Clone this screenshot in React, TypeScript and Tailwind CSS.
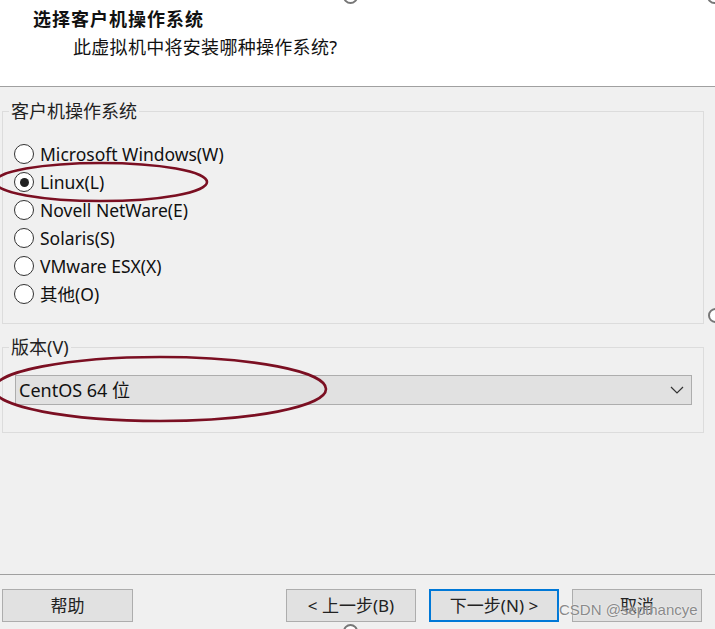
import React, { useState } from "react";

const OPTIONS = [
  "Microsoft Windows(W)",
  "Linux(L)",
  "Novell NetWare(E)",
  "Solaris(S)",
  "VMware ESX(X)",
  "其他(O)",
];

const FONT = "font-['Noto_Sans','Noto_Sans_CJK_SC',sans-serif]";

const Radio = ({ checked }: { checked: boolean }) => (
  <span className="w-[20px] h-[20px] rounded-full border border-[#333] bg-white flex items-center justify-center shrink-0">
    {checked && <span className="w-[9px] h-[9px] rounded-full bg-[#222]" />}
  </span>
);

const Button = ({
  label,
  focused,
  className,
}: {
  label: string;
  focused?: boolean;
  className?: string;
}) => (
  <button
    className={
      "h-[33px] w-[130px] bg-[#e1e1e1] text-[17px] text-[#222] " +
      (focused ? "border-2 border-[#0078d7] " : "border border-[#adadad] ") +
      (className || "")
    }
  >
    {label}
  </button>
);

export default function App() {
  const [selected, setSelected] = useState(1);

  return (
    <div
      className={`relative w-[715px] h-[629px] overflow-hidden bg-[#f0f0f0] ${FONT} text-[#111]`}
    >
      {/* header */}
      <div className="h-[87px] bg-white border-b border-[#a0a0a0] pt-[5px]">
        <div className="pl-[33px] text-[18px] font-bold leading-[26px] tracking-[1px] font-['Noto_Sans_CJK_SC',sans-serif]">
          选择客户机操作系统
        </div>
        <div className="pl-[73px] mt-[3px] text-[18px] leading-[26px] tracking-[0.3px]">
          此虚拟机中将安装哪种操作系统?
        </div>
      </div>

      {/* guest os group */}
      <fieldset className="mx-[2px] mr-[11px] mt-[11px] border border-[#dcdcdc] h-[226px] pl-[11px]">
        <legend className="-ml-[5px] px-[2px] text-[18px] leading-[26px] text-[#222]">
          客户机操作系统
        </legend>
        <div className="flex flex-col mt-[16px]">
          {OPTIONS.map((o, i) => (
            <label
              key={o}
              className="h-[28px] flex items-center gap-[6px] cursor-pointer"
              onClick={() => setSelected(i)}
            >
              <Radio checked={selected === i} />
              <span className="text-[17.5px] leading-[28px]">{o}</span>
            </label>
          ))}
        </div>
      </fieldset>

      {/* version group */}
      <fieldset className="mx-[2px] mr-[11px] mt-[10px] border border-[#dcdcdc] h-[99px] pl-[12px] pr-[11px]">
        <legend className="-ml-[6px] px-[2px] text-[18px] leading-[26px] text-[#222]">
          版本(V)
        </legend>
        <div className="mt-[15px] h-[30px] bg-[#e1e1e1] border border-[#adadad] flex items-center justify-between pl-[3px] pr-[6px]">
          <span className="text-[18px]">CentOS 64 位</span>
          <svg width="16" height="10" viewBox="0 0 16 10">
            <path d="M2 2 L8 8 L14 2" fill="none" stroke="#333" strokeWidth="1.2" />
          </svg>
        </div>
      </fieldset>

      {/* footer */}
      <div className="absolute left-0 right-0 top-[574px] border-t border-[#a0a0a0] h-[55px] pt-[14px] px-[2px] flex">
        <Button label="帮助" className="w-[131px]" />
        <div className="ml-auto flex gap-[13px] pr-[11px]">
          <Button label="< 上一步(B)" />
          <Button label="下一步(N) >" focused />
          <Button label="取消" />
        </div>
      </div>

      {/* annotations */}
      <svg className="absolute inset-0 pointer-events-none" width="715" height="629">
        <ellipse cx="101" cy="182" rx="106" ry="19" fill="none" stroke="#7b0f22" strokeWidth="2.6" />
        <ellipse cx="160" cy="389" rx="166" ry="32" fill="none" stroke="#7b0f22" strokeWidth="2.6" />
      </svg>

      {/* resize handles */}
      <div className="absolute left-[343px] top-[-11px] w-[15px] h-[15px] rounded-full bg-white border-2 border-[#777]" />
      <div className="absolute left-[707px] top-[-11px] w-[15px] h-[15px] rounded-full bg-white border-2 border-[#777]" />
      <div className="absolute left-[708px] top-[308px] w-[15px] h-[15px] rounded-full bg-white border-2 border-[#777]" />
      <div className="absolute left-[343px] top-[624px] w-[15px] h-[15px] rounded-full bg-white border-2 border-[#777]" />

      {/* watermark */}
      <div className="absolute left-[559px] top-[600px] text-[15px] leading-[20px] text-[#8a8a8a] font-['Liberation_Sans',sans-serif] [text-shadow:0_0_2px_#fff]">
        CSDN @septhancye
      </div>
    </div>
  );
}
